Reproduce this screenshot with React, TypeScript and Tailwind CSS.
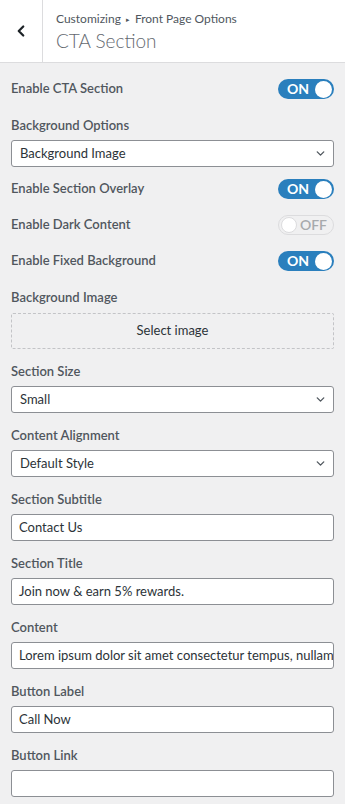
import { ChevronDown, ChevronLeft } from "lucide-react";

function Toggle({ on }: { on: boolean }) {
  if (on) {
    return (
      <div className="flex h-[20px] w-[56px] items-center justify-between rounded-full bg-[#2a7fbd] pl-[9px] pr-[2px]">
        <span className="text-[14px] font-bold leading-none text-white">ON</span>
        <span className="h-[17px] w-[17px] rounded-full bg-white" />
      </div>
    );
  }
  return (
    <div className="flex h-[20px] w-[56px] items-center justify-between rounded-full border border-[#dcdcde] bg-[#f0f0f1] pl-[2px] pr-[6px]">
      <span className="h-[16px] w-[16px] rounded-full border border-[#dcdcde] bg-white" />
      <span className="text-[14px] font-semibold leading-none text-[#a7aaad]">OFF</span>
    </div>
  );
}

function ToggleRow({ label, on }: { label: string; on: boolean }) {
  return (
    <div className="flex h-[36px] items-center justify-between">
      <span className="text-[13px] font-semibold text-[#50575e]">{label}</span>
      <Toggle on={on} />
    </div>
  );
}

function Label({ text }: { text: string }) {
  return <span className="mb-[6px] text-[13px] font-semibold leading-[18px] text-[#50575e]">{text}</span>;
}

function Select({ label, value, className = "pb-[13px]" }: { label: string; value: string; className?: string }) {
  return (
    <div className={`flex flex-col ${className}`}>
      <Label text={label} />
      <div className="flex h-[27px] items-center justify-between rounded-[3px] border border-[#8c8f94] bg-white pl-[8px] pr-[6px]">
        <span className="text-[13px] text-[#2c3338]">{value}</span>
        <ChevronDown className="h-[13px] w-[13px] text-[#50575e]" strokeWidth={2.5} />
      </div>
    </div>
  );
}

function TextInput({ label, value }: { label: string; value: string }) {
  return (
    <div className="flex flex-col pb-[13px]">
      <Label text={label} />
      <div className="flex h-[27px] items-center overflow-hidden whitespace-nowrap rounded-[3px] border border-[#8c8f94] bg-white px-[7px]">
        <span className="text-[13px] text-[#2c3338]">{value}</span>
      </div>
    </div>
  );
}

export default function App() {
  return (
    <div className="min-h-[804px] w-[345px] bg-[#f0f0f1]" style={{ fontFamily: 'Lato, "Noto Sans", sans-serif' }}>
      {/* Header */}
      <div className="flex h-[63px] border-b border-[#dcdcde] bg-white">
        <div className="flex w-[43px] items-center justify-center border-r border-[#dcdcde]">
          <ChevronLeft className="h-[18px] w-[18px] text-[#1d2327]" strokeWidth={3} />
        </div>
        <div className="flex flex-col justify-center pl-[13px] pt-[2px]">
          <div className="flex items-center gap-[5px] text-[12px] leading-[16px] text-[#50575e]">
            <span>Customizing</span>
            <span className="text-[7px]">▸</span>
            <span>Front Page Options</span>
          </div>
          <div className="text-[19px] font-light leading-[27px] text-[#646970]">CTA Section</div>
        </div>
      </div>

      {/* Controls */}
      <div className="flex flex-col px-[11px] pt-[8px]">
        <ToggleRow label="Enable CTA Section" on />
        <div className="pt-[9px]">
          <Select label="Background Options" value="Background Image" className="pb-[4px]" />
        </div>
        <ToggleRow label="Enable Section Overlay" on />
        <ToggleRow label="Enable Dark Content" on={false} />
        <ToggleRow label="Enable Fixed Background" on />

        <div className="flex flex-col pt-[9px] pb-[13px]">
          <span className="mb-[7px] text-[13px] font-semibold leading-[18px] text-[#50575e]">Background Image</span>
          <div className="flex h-[36px] items-center justify-center rounded-[2px] border border-dashed border-[#c3c4c7] text-[13px] text-[#2c3338]">
            Select image
          </div>
        </div>

        <Select label="Section Size" value="Small" />
        <Select label="Content Alignment" value="Default Style" />
        <TextInput label="Section Subtitle" value="Contact Us" />
        <TextInput label="Section Title" value="Join now & earn 5% rewards." />
        <TextInput label="Content" value="Lorem ipsum dolor sit amet consectetur tempus, nullam" />
        <TextInput label="Button Label" value="Call Now" />
        <TextInput label="Button Link" value="" />
      </div>
    </div>
  );
}
